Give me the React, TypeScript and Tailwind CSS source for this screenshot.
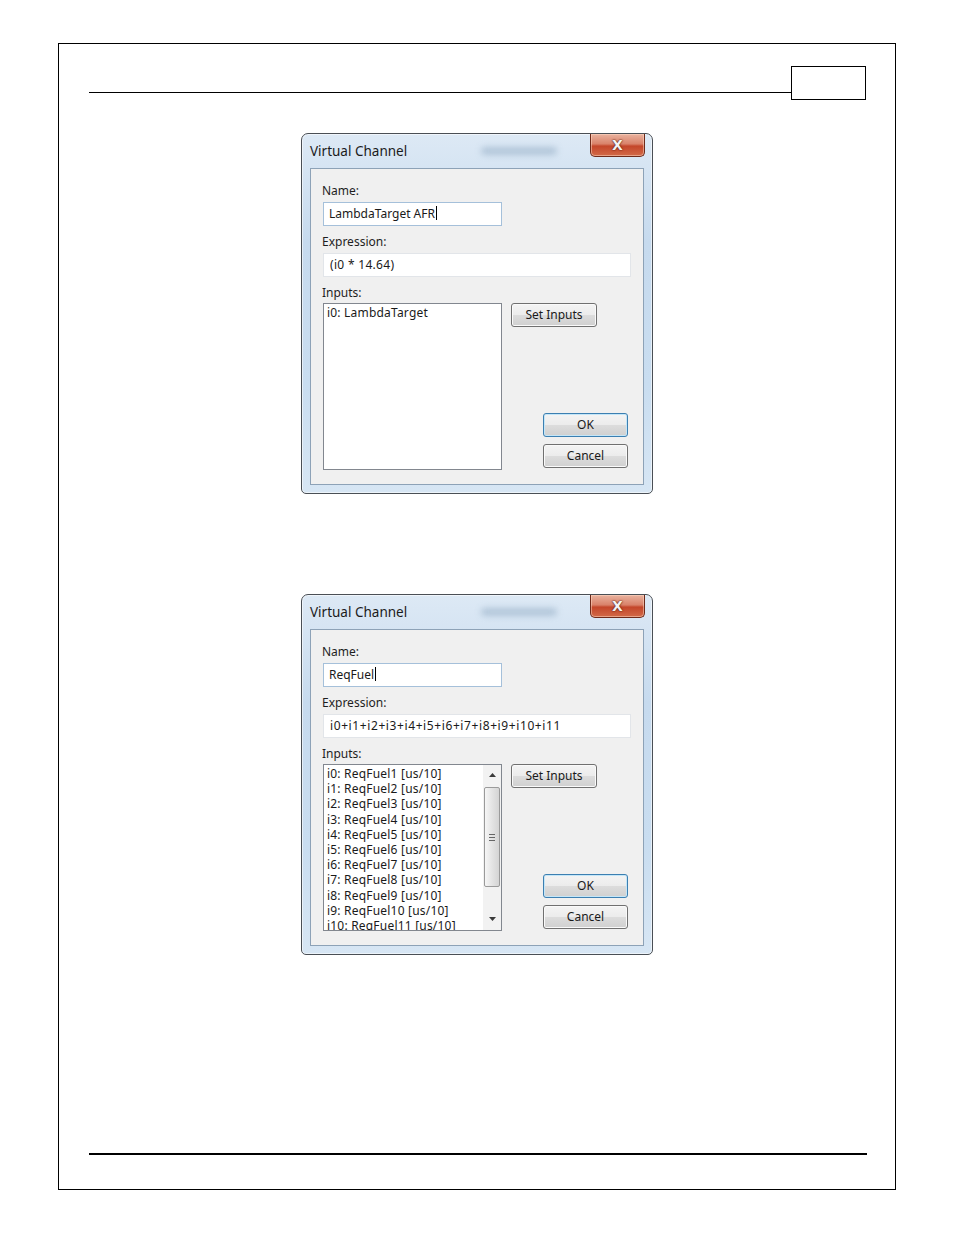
import React from 'react';

const font = { fontFamily: '"Noto Sans", "Open Sans", Arial, sans-serif' };

const Caret = () => <span className="inline-block w-px h-[14px] bg-black align-middle ml-px -mt-[2px]" />;

const Btn: React.FC<{ children: React.ReactNode; def?: boolean; className?: string }> = ({ children, def, className = '' }) => (
  <div
    className={`h-[24px] rounded-[3px] border flex items-center justify-center text-[12px] text-[#1a1a1a] bg-[linear-gradient(#f4f4f4_0%,#ececec_48%,#dcdcdc_52%,#d0d0d0_100%)] ${
      def ? 'border-[#3c7fb1] shadow-[inset_0_0_0_1px_#c4e6f8]' : 'border-[#707070] shadow-[inset_0_0_0_1px_#fafafa]'
    } ${className}`}
  >
    {children}
  </div>
);

const Label: React.FC<{ children: React.ReactNode; className?: string }> = ({ children, className = '' }) => (
  <div className={`h-[15px] leading-[15px] text-[12px] text-[#1e1e1e] -ml-px ${className}`}>{children}</div>
);

const Arrow = ({ up }: { up?: boolean }) => (
  <svg width="7" height="4" viewBox="0 0 7 4">
    <polygon points={up ? '0,4 7,4 3.5,0' : '0,0 7,0 3.5,4'} fill="#3a3a3a" />
  </svg>
);

const Scrollbar = () => (
  <div className="w-[18px] flex flex-col items-center bg-[#f2f2f2]">
    <div className="h-[20px] flex items-center justify-center">
      <Arrow up />
    </div>
    <div className="mt-[2px] w-[16px] h-[100px] rounded-[2px] border border-[#9a9a9a] bg-[linear-gradient(90deg,#f6f6f6,#e2e2e2_55%,#d4d4d4)] flex items-center justify-center">
      <div className="flex flex-col gap-[2px]">
        <div className="w-[6px] h-px bg-[#666]" />
        <div className="w-[6px] h-px bg-[#666]" />
        <div className="w-[6px] h-px bg-[#666]" />
      </div>
    </div>
    <div className="mt-auto h-[22px] flex items-center justify-center">
      <Arrow />
    </div>
  </div>
);

const Dialog: React.FC<{
  name: string;
  expr: string;
  exprTrack: string;
  inputs: string[];
  scroll?: boolean;
  className?: string;
}> = ({ name, expr, exprTrack, inputs, scroll, className = '' }) => (
  <div
    className={`w-[352px] h-[361px] mx-auto border border-[#4a4f55] rounded-t-[7px] rounded-b-[5px] flex flex-col px-[8px] pb-[8px] bg-[linear-gradient(180deg,#dde9f5_0%,#c6daee_30%,#c9ddf0_70%,#d7e6f4_100%)] shadow-[inset_0_0_0_1px_rgba(255,255,255,0.55)] ${className}`}
  >
    <div className="h-[34px] flex items-start">
      <div className="mt-[8px] text-[13.5px] leading-[18px] text-[#1b1b1b]">Virtual Channel</div>
      <div className="ml-auto mr-[33px] mt-[13px] w-[76px] h-[8px] rounded-full bg-[#a7bdd2] blur-[3px] opacity-80" />
      <div className="w-[55px] h-[23px] -mr-px rounded-b-[5px] border border-t-0 border-[#6e2a1a] bg-[linear-gradient(180deg,#eab39f_0%,#d9826a_45%,#c4462a_55%,#d26a48_100%)] shadow-[inset_0_0_0_1px_rgba(255,220,200,0.5)] flex items-center justify-center">
        <span className="text-[14px] font-bold leading-none text-[#f4f4f4] [text-shadow:0_0_2px_#5a1a0a,0_0_1px_#5a1a0a]" style={{ fontFamily: '"DejaVu Sans", sans-serif' }}>
          X
        </span>
      </div>
    </div>
    <div className="flex-1 border border-[#8da2b7] bg-[#f0f0f0] flex flex-col pl-[12px] pr-[12px] pt-[14px]">
      <Label>Name:</Label>
      <div className="mt-[4px] w-[179px] h-[24px] border border-[#a5c0da] bg-white flex items-center pl-[5px] text-[12px] text-[#1a1a1a]">
        {name}
        <Caret />
      </div>
      <Label className="mt-[8px]">Expression:</Label>
      <div className={`mt-[4px] h-[24px] border border-[#e2e5e9] bg-white flex items-center pl-[6px] text-[12px] text-[#1a1a1a] whitespace-nowrap ${exprTrack}`}>
        {expr}
      </div>
      <Label className="mt-[8px]">Inputs:</Label>
      <div className="mt-[3px] flex">
        <div className="w-[179px] h-[167px] border border-[#82878f] bg-white flex overflow-hidden">
          <div className="flex-1 pl-[3px] pt-[1px] text-[12px] leading-[15.2px] tracking-[0.2px] text-[#1a1a1a] overflow-hidden whitespace-nowrap">
            {inputs.map((t) => (
              <div key={t}>{t}</div>
            ))}
          </div>
          {scroll && <Scrollbar />}
        </div>
        <div className="flex-1 flex flex-col pl-[9px] pr-[3px] pb-[2px]">
          <Btn className="w-[86px]">Set Inputs</Btn>
          <div className="mt-auto flex flex-col items-end gap-[7px]">
            <Btn def className="w-[85px]">
              OK
            </Btn>
            <Btn className="w-[85px]">Cancel</Btn>
          </div>
        </div>
      </div>
    </div>
  </div>
);

export default function App() {
  const reqInputs = Array.from({ length: 11 }, (_, i) => `i${i}: ReqFuel${i + 1} [us/10]`);
  return (
    <div className="w-[954px] h-[1235px] bg-white pt-[43px] pl-[58px]" style={font}>
      <div className="w-[838px] h-[1147px] border border-black flex flex-col">
        <div className="flex items-start pl-[30px] pr-[29px] pt-[22px]">
          <div className="flex-1 h-[27px] border-b border-black" />
          <div className="w-[75px] h-[34px] border border-black" />
        </div>
        <Dialog
          className="mt-[33px]"
          name="LambdaTarget AFR"
          expr="(i0 * 14.64)"
          exprTrack="tracking-[0.3px]"
          inputs={['i0: LambdaTarget']}
        />
        <Dialog
          className="mt-[100px]"
          name="ReqFuel"
          expr="i0+i1+i2+i3+i4+i5+i6+i7+i8+i9+i10+i11"
          exprTrack="tracking-[0.6px]"
          inputs={reqInputs}
          scroll
        />
        <div className="flex-1" />
        <div className="ml-[30px] mr-[28px] mb-[34px] h-[2px] bg-black" />
      </div>
    </div>
  );
}
